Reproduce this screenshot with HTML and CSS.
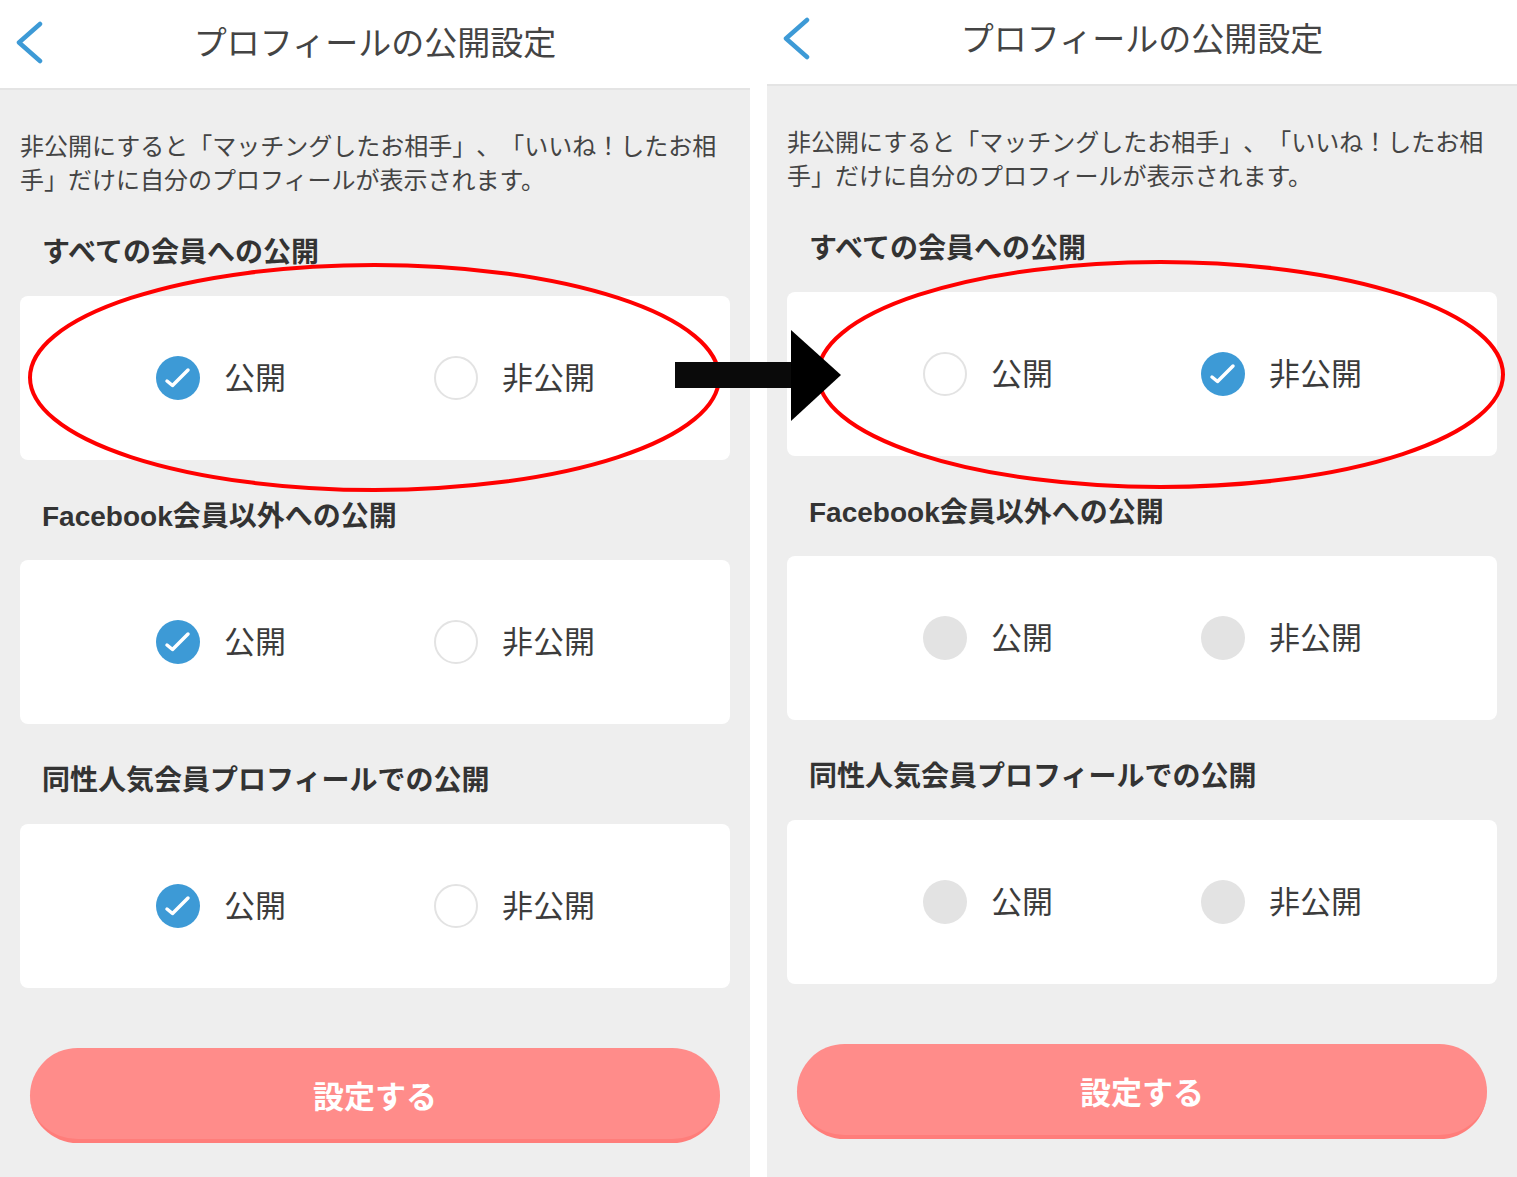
FILE: index.html
```html
<!DOCTYPE html>
<html lang="ja">
<head>
    <meta charset="UTF-8">
    <meta name="viewport" content="width=device-width, initial-scale=1.0">
    <title>プロフィールの公開設定</title>
    <link rel="stylesheet" href="styles.css">
</head>
<body>
    <div class="page">

        <div class="screen">
            <div class="header">
                <svg class="back" width="30" height="44" viewBox="0 0 30 44"><polyline points="26,3 5,21.5 26,40" /></svg>
                <div class="title">プロフィールの公開設定</div>
                <div class="spacer"></div>
            </div>
            <p class="note">非公開にすると「マッチングしたお相手」、「いいね！したお相手」だけに自分のプロフィールが表示されます。</p>

            <div class="label">すべての会員への公開</div>
            <div class="card">
                <div class="option"><span class="radio checked"><svg viewBox="0 0 44 44"><polyline points="11,25 16.5,29.5 32,14" /></svg></span>公開</div>
                <div class="option"><span class="radio"></span>非公開</div>
            </div>

            <div class="label">Facebook会員以外への公開</div>
            <div class="card">
                <div class="option"><span class="radio checked"><svg viewBox="0 0 44 44"><polyline points="11,25 16.5,29.5 32,14" /></svg></span>公開</div>
                <div class="option"><span class="radio"></span>非公開</div>
            </div>

            <div class="label">同性人気会員プロフィールでの公開</div>
            <div class="card">
                <div class="option"><span class="radio checked"><svg viewBox="0 0 44 44"><polyline points="11,25 16.5,29.5 32,14" /></svg></span>公開</div>
                <div class="option"><span class="radio"></span>非公開</div>
            </div>

            <div class="submit">設定する</div>
        </div>

        <div class="screen shifted">
            <div class="header">
                <svg class="back" width="30" height="44" viewBox="0 0 30 44"><polyline points="26,3 5,21.5 26,40" /></svg>
                <div class="title">プロフィールの公開設定</div>
                <div class="spacer"></div>
            </div>
            <p class="note">非公開にすると「マッチングしたお相手」、「いいね！したお相手」だけに自分のプロフィールが表示されます。</p>

            <div class="label">すべての会員への公開</div>
            <div class="card">
                <div class="option"><span class="radio"></span>公開</div>
                <div class="option"><span class="radio checked"><svg viewBox="0 0 44 44"><polyline points="11,25 16.5,29.5 32,14" /></svg></span>非公開</div>
            </div>

            <div class="label">Facebook会員以外への公開</div>
            <div class="card">
                <div class="option"><span class="radio disabled"></span>公開</div>
                <div class="option"><span class="radio disabled"></span>非公開</div>
            </div>

            <div class="label">同性人気会員プロフィールでの公開</div>
            <div class="card">
                <div class="option"><span class="radio disabled"></span>公開</div>
                <div class="option"><span class="radio disabled"></span>非公開</div>
            </div>

            <div class="submit">設定する</div>
        </div>

        <!-- annotation drawn over both screens -->
        <svg class="marks" width="1517" height="1177" viewBox="0 0 1517 1177">
            <ellipse cx="374.5" cy="377.5" rx="344.5" ry="112.5" />
            <ellipse cx="1160.5" cy="374.5" rx="342.5" ry="112.5" />
            <rect class="shaft" x="675" y="362" width="117" height="26" />
            <polygon class="head" points="791,330 841,375 791,421" />
        </svg>
    </div>
</body>
</html>
```

FILE: styles.css
```css
* {
    box-sizing: border-box;
}

body {
    margin: 0;
    background: #fff;
    font-family: "Noto Sans CJK JP", "Noto Sans", sans-serif;
    color: #3c3c3c;
}

.page {
    position: relative;
    display: flex;
    gap: 17px;
    width: 1517px;
    height: 1177px;
    overflow: hidden;
    background: #fff;
}

.screen {
    flex-shrink: 0;
    align-self: flex-start;
    width: 750px;
    height: 1177px;
    background: #eeeeee;
}

.screen.shifted {
    margin-top: -4px;
    height: 1181px;
}

.header {
    display: flex;
    align-items: center;
    height: 90px;
    padding: 0 0 2px 14px;
    background: #fff;
    border-bottom: 2px solid #e4e4e4;
}

.back polyline {
    fill: none;
    stroke: #3d9ad6;
    stroke-width: 4.5;
    stroke-linecap: round;
    stroke-linejoin: round;
}

.title {
    flex: 1;
    text-align: center;
    font-size: 33px;
    line-height: 44px;
    color: #444;
    padding-bottom: 4px;
    text-spacing-trim: space-all;
}

.spacer {
    width: 44px;
}

.note {
    margin: 0;
    padding: 38px 20px 0;
    font-size: 24px;
    line-height: 34px;
    color: #444;
    text-spacing-trim: space-all;
}

.label {
    margin: 37px 0 23px 42px;
    font-family: "Liberation Sans", "Noto Sans CJK JP", sans-serif;
    font-size: 28px;
    line-height: 40px;
    font-weight: bold;
    color: #333;
}

.card {
    display: grid;
    grid-template-columns: 278px auto;
    align-items: center;
    height: 164px;
    margin: 0 20px;
    padding-left: 136px;
    background: #fff;
    border-radius: 8px;
}

.option {
    display: flex;
    align-items: center;
    gap: 24px;
    padding-bottom: 4px;
    font-size: 31px;
    line-height: 44px;
    color: #3c3c3c;
}

.radio {
    display: block;
    width: 44px;
    height: 44px;
    margin-top: 4px;
    border-radius: 50%;
    border: 2px solid #e3e3e3;
    background: #fff;
}

.radio.checked {
    border: none;
    background: #3d9ad6;
}

.radio.checked svg {
    display: block;
    width: 44px;
    height: 44px;
}

.radio.checked polyline {
    fill: none;
    stroke: #fff;
    stroke-width: 3.5;
    stroke-linecap: round;
    stroke-linejoin: round;
}

.radio.disabled {
    border: none;
    background: #e3e3e3;
}

.submit {
    display: flex;
    align-items: center;
    justify-content: center;
    height: 95px;
    margin: 60px 30px 0;
    padding-top: 2px;
    border-radius: 48px;
    background: #ff8c8a;
    border-bottom: 4px solid #ff7d7a;
    color: #fff;
    font-size: 31px;
    font-weight: bold;
}

.marks {
    position: absolute;
    top: 0;
    left: 0;
    pointer-events: none;
}

.marks ellipse {
    fill: none;
    stroke: #ff0000;
    stroke-width: 4;
}

.marks .shaft {
    fill: #0a0a0a;
}

.marks .head {
    fill: #000;
}
```
